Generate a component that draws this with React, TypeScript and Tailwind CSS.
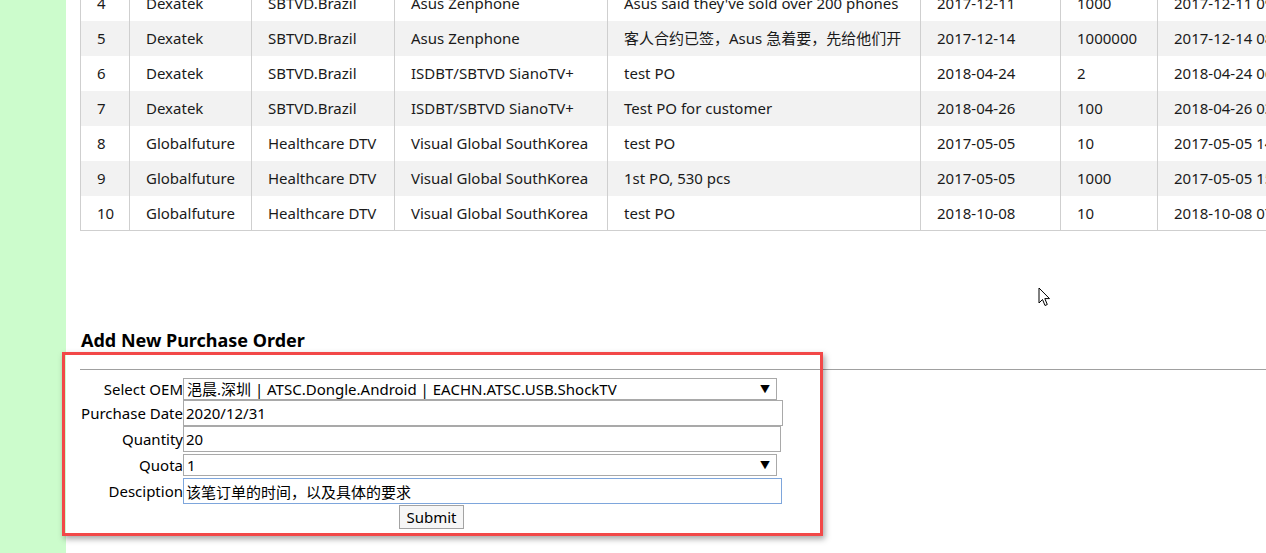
import React from "react";

type Order = {
  id: number;
  oem: string;
  project: string;
  customer: string;
  note: string;
  date: string;
  qty: string;
  created: string;
};

const orders: Order[] = [
  { id: 4, oem: "Dexatek", project: "SBTVD.Brazil", customer: "Asus Zenphone", note: "Asus said they've sold over 200 phones", date: "2017-12-11", qty: "1000", created: "2017-12-11 09:21:43" },
  { id: 5, oem: "Dexatek", project: "SBTVD.Brazil", customer: "Asus Zenphone", note: "客人合约已签，Asus 急着要，先给他们开", date: "2017-12-14", qty: "1000000", created: "2017-12-14 08:15:02" },
  { id: 6, oem: "Dexatek", project: "SBTVD.Brazil", customer: "ISDBT/SBTVD SianoTV+", note: "test PO", date: "2018-04-24", qty: "2", created: "2018-04-24 06:40:11" },
  { id: 7, oem: "Dexatek", project: "SBTVD.Brazil", customer: "ISDBT/SBTVD SianoTV+", note: "Test PO for customer", date: "2018-04-26", qty: "100", created: "2018-04-26 03:12:57" },
  { id: 8, oem: "Globalfuture", project: "Healthcare DTV", customer: "Visual Global SouthKorea", note: "test PO", date: "2017-05-05", qty: "10", created: "2017-05-05 14:02:36" },
  { id: 9, oem: "Globalfuture", project: "Healthcare DTV", customer: "Visual Global SouthKorea", note: "1st PO, 530 pcs", date: "2017-05-05", qty: "1000", created: "2017-05-05 15:30:08" },
  { id: 10, oem: "Globalfuture", project: "Healthcare DTV", customer: "Visual Global SouthKorea", note: "test PO", date: "2018-10-08", qty: "10", created: "2018-10-08 07:45:19" },
];

const cell = "px-4 border-x border-[#cfcfcf] whitespace-nowrap overflow-hidden";

const SelectBox: React.FC<{ value: string }> = ({ value }) => (
  <div className="flex items-center justify-between w-[594px] h-[22px] border border-[#a9a9a9] bg-white pl-[3px] pr-[6px]">
    <span className="whitespace-nowrap">{value}</span>
    <span className="text-[10px] leading-none">▼</span>
  </div>
);

const App: React.FC = () => {
  return (
    <div className="relative flex w-full h-[553px] overflow-hidden bg-white text-[15px] text-[#1a1a1a] font-['Noto_Sans','Noto_Sans_CJK_SC',sans-serif]">
      {/* green side strip */}
      <div className="w-[66px] shrink-0 bg-[#ccfccc]" />

      <div className="flex-1 min-w-0 pl-[14px]">
        {/* orders table (scrolled) */}
        <table className="-mt-[15px] table-fixed border-collapse border border-[#cfcfcf] w-[1237px]">
          <colgroup>
            <col className="w-[49px]" />
            <col className="w-[122px]" />
            <col className="w-[143px]" />
            <col className="w-[213px]" />
            <col className="w-[313px]" />
            <col className="w-[140px]" />
            <col className="w-[97px]" />
            <col className="w-[160px]" />
          </colgroup>
          <tbody>
            {orders.map((o, i) => (
              <tr key={o.id} className={i % 2 === 1 ? "h-[35px] bg-[#f2f2f2]" : "h-[35px] bg-white"}>
                <td className={cell}>{o.id}</td>
                <td className={cell}>{o.oem}</td>
                <td className={cell}>{o.project}</td>
                <td className={cell}>{o.customer}</td>
                <td className={cell}>{o.note}</td>
                <td className={cell}>{o.date}</td>
                <td className={cell}>{o.qty}</td>
                <td className={cell}>{o.created}</td>
              </tr>
            ))}
          </tbody>
        </table>

        <h3 className="mt-[97px] ml-px text-[18px] leading-6 font-bold text-black">Add New Purchase Order</h3>
        <div className="mt-[17px] h-px bg-[#a0a0a0]" />

        {/* form */}
        <div className="mt-[8px] grid grid-cols-[103px_600px] text-black">
          <div className="h-[22px] flex items-center justify-end whitespace-nowrap">Select OEM</div>
          <SelectBox value="浥晨.深圳 | ATSC.Dongle.Android | EACHN.ATSC.USB.ShockTV" />

          <div className="h-[26px] flex items-center justify-end whitespace-nowrap">Purchase Date</div>
          <input
            readOnly
            value="2020/12/31"
            className="w-[600px] h-[26px] border border-[#a9a9a9] px-[2px] bg-white"
          />

          <div className="h-[26px] flex items-center justify-end whitespace-nowrap">Quantity</div>
          <input
            readOnly
            value="20"
            className="w-[598px] h-[26px] border border-[#a9a9a9] px-[2px] bg-white"
          />

          <div className="h-[26px] flex items-center justify-end whitespace-nowrap">Quota</div>
          <div className="h-[26px] flex items-center">
            <SelectBox value="1" />
          </div>

          <div className="h-[26px] flex items-center justify-end whitespace-nowrap">Desciption</div>
          <input
            readOnly
            value="该笔订单的时间，以及具体的要求"
            className="w-[599px] h-[26px] border border-[#7ea6dc] px-[2px] bg-white outline-none"
          />

          <div className="col-span-2 flex justify-center pt-px">
            <button className="h-[24px] px-[6px] border border-[#a3a3a3] bg-[#f6f6f6] leading-none">Submit</button>
          </div>
        </div>
      </div>

      {/* red highlight annotation */}
      <div className="absolute left-[62px] top-[352px] w-[761px] h-[184px] border-[3px] border-[#f24848] shadow-[2px_3px_6px_rgba(0,0,0,0.35)] pointer-events-none" />

      {/* mouse cursor */}
      <svg className="absolute left-[1038px] top-[287px]" width="13" height="20" viewBox="0 0 13 20">
        <path d="M1 1 L1 16 L4.5 12.5 L7 18.5 L9.3 17.5 L6.8 11.6 L11.5 11.6 Z" fill="#fff" stroke="#000" strokeWidth="1" strokeLinejoin="round" />
      </svg>
    </div>
  );
};

export default App;
